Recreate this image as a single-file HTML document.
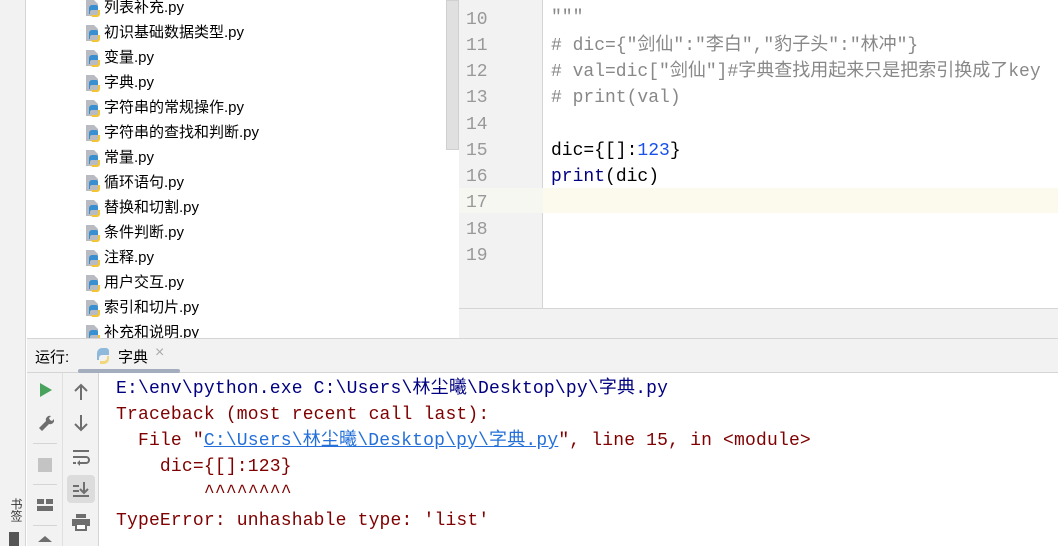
<!DOCTYPE html><html><head><meta charset="utf-8"><style>
*{margin:0;padding:0;box-sizing:border-box}
body{width:1058px;height:546px;overflow:hidden;background:#fff;position:relative;font-family:"Liberation Sans","Noto Sans CJK SC",sans-serif}
.a{position:absolute}
.row{position:absolute;left:84px;height:25px;line-height:25px;font-size:15px;color:#000;white-space:nowrap}
.row svg{position:absolute;left:0;top:4px}
.row span{position:absolute;left:20px}
.mono{font-family:"Liberation Mono","Noto Sans CJK SC",monospace;font-size:18px;white-space:pre}
.ln{position:absolute;left:466px;width:30px;color:#999;font-size:18px;font-family:"Liberation Mono",monospace}
.cl{position:absolute;left:551px;height:25px;line-height:25px}
.con{position:absolute;left:116px;height:26px;line-height:26px;letter-spacing:0.18px}
</style></head><body>
<div class="a" style="left:0;top:0;width:26px;height:546px;background:#f2f2f2;border-right:1px solid #d5d5d5"></div>
<div class="a" style="left:446px;top:0;width:13px;height:150px;background:#e0e0e0;border:1px solid #d0d0d0"></div>
<svg width="0" height="0" style="position:absolute"><defs><g id="py"><path d="M2 1h8l4 4v12H2z" fill="#b8bcc2"/><path d="M8 6h4a2 2 0 012 2v3H8a2 2 0 00-2 2v2H5V9a3 3 0 013-3z" fill="#3a8fd1"/><path d="M7 16h5a2 2 0 002-2v-3h2v4a3 3 0 01-3 3H8z" fill="#f3c534"/></g></defs></svg>
<div class="row" style="top:-5px"><svg width="18" height="18"><use href="#py"/></svg><span>列表补充.py</span></div>
<div class="row" style="top:20px"><svg width="18" height="18"><use href="#py"/></svg><span>初识基础数据类型.py</span></div>
<div class="row" style="top:45px"><svg width="18" height="18"><use href="#py"/></svg><span>变量.py</span></div>
<div class="row" style="top:70px"><svg width="18" height="18"><use href="#py"/></svg><span>字典.py</span></div>
<div class="row" style="top:95px"><svg width="18" height="18"><use href="#py"/></svg><span>字符串的常规操作.py</span></div>
<div class="row" style="top:120px"><svg width="18" height="18"><use href="#py"/></svg><span>字符串的查找和判断.py</span></div>
<div class="row" style="top:145px"><svg width="18" height="18"><use href="#py"/></svg><span>常量.py</span></div>
<div class="row" style="top:170px"><svg width="18" height="18"><use href="#py"/></svg><span>循环语句.py</span></div>
<div class="row" style="top:195px"><svg width="18" height="18"><use href="#py"/></svg><span>替换和切割.py</span></div>
<div class="row" style="top:220px"><svg width="18" height="18"><use href="#py"/></svg><span>条件判断.py</span></div>
<div class="row" style="top:245px"><svg width="18" height="18"><use href="#py"/></svg><span>注释.py</span></div>
<div class="row" style="top:270px"><svg width="18" height="18"><use href="#py"/></svg><span>用户交互.py</span></div>
<div class="row" style="top:295px"><svg width="18" height="18"><use href="#py"/></svg><span>索引和切片.py</span></div>
<div class="row" style="top:320px"><svg width="18" height="18"><use href="#py"/></svg><span>补充和说明.py</span></div>
<!-- editor -->
<div class="a" style="left:459px;top:0;width:84px;height:308px;background:#f2f2f2;border-right:1px solid #d5d5d5"></div>
<div class="a" style="left:459px;top:188px;width:599px;height:25px;background:#fcfaed"></div>
<div class="a" style="left:459px;top:188px;width:84px;height:25px;background:#f7f7f2"></div>
<div class="a" style="left:459px;top:308px;width:599px;height:30px;background:#f2f2f2;border-top:1px solid #d5d5d5"></div>
<div class="ln" style="top:10px">10</div><div class="ln" style="top:36px">11</div><div class="ln" style="top:62px">12</div><div class="ln" style="top:88px">13</div><div class="ln" style="top:115px">14</div><div class="ln" style="top:141px">15</div><div class="ln" style="top:167px">16</div><div class="ln" style="top:193px">17</div><div class="ln" style="top:220px">18</div><div class="ln" style="top:246px">19</div>
<div class="cl mono" style="top:6px;color:#888">"""</div>
<div class="cl mono" style="top:34px;color:#888"># dic={"剑仙":"李白","豹子头":"林冲"}</div>
<div class="cl mono" style="top:60px;color:#888"># val=dic["剑仙"]#字典查找用起来只是把索引换成了key</div>
<div class="cl mono" style="top:86px;color:#888"># print(val)</div>
<div class="cl mono" style="top:139px;color:#000">dic={[]:<span style="color:#1750eb">123</span>}</div>
<div class="cl mono" style="top:165px;color:#000"><span style="color:#000080">print</span>(dic)</div>
<!-- run bar -->
<div class="a" style="left:27px;top:338px;width:1031px;height:35px;background:#f2f2f2;border-top:1px solid #d5d5d5;border-bottom:1px solid #d5d5d5"></div>
<div class="a" style="left:35px;top:346px;font-size:15px">运行:</div>
<svg class="a" style="left:94px;top:347px" width="18" height="18"><path d="M8 1h4a3 3 0 013 3v4H8a3 3 0 00-3 3v2H3V6a5 5 0 015-5z" fill="#8fb9db"/><path d="M6 17h4a5 5 0 005-5V9h-2v2a3 3 0 01-3 3H6z" fill="#f0d87a"/></svg>
<div class="a" style="left:118px;top:346px;font-size:15px">字典</div>
<div class="a" style="left:155px;top:344px;font-size:16px;color:#aaa">×</div>
<div class="a" style="left:78px;top:369px;width:102px;height:4px;border-radius:2px;background:#a3adbd"></div>
<!-- console -->
<div class="a" style="left:27px;top:373px;width:36px;height:173px;background:#f2f2f2;border-right:1px solid #e0e0e0"></div>
<div class="a" style="left:63px;top:373px;width:36px;height:173px;background:#f2f2f2;border-right:1px solid #d5d5d5"></div>
<svg class="a" style="left:37px;top:382px" width="16" height="16"><path d="M3 1l12 7-12 7z" fill="#4aa35c"/></svg>
<svg class="a" style="left:36px;top:413px" width="18" height="18"><path d="M3 15l7-7a4 4 0 015-5l-2 2 1 2 2 1 2-2a4 4 0 01-5 5l-7 7z" fill="#6e6e6e"/></svg>
<div class="a" style="left:33px;top:443px;width:24px;height:1px;background:#d5d5d5"></div>
<div class="a" style="left:38px;top:458px;width:14px;height:14px;background:#c4c4c4"></div>
<div class="a" style="left:33px;top:484px;width:24px;height:1px;background:#d5d5d5"></div>
<svg class="a" style="left:36px;top:498px" width="18" height="14"><rect x="1" y="1" width="7" height="5" fill="#6e6e6e"/><rect x="10" y="1" width="7" height="5" fill="#6e6e6e"/><rect x="1" y="8" width="16" height="5" fill="#6e6e6e"/></svg>
<div class="a" style="left:33px;top:525px;width:24px;height:1px;background:#d5d5d5"></div>
<svg class="a" style="left:37px;top:536px" width="16" height="10"><path d="M8 0l7 6H1z" fill="#6e6e6e"/></svg>
<svg class="a" style="left:72px;top:383px" width="18" height="18"><path d="M9 2v15M3 8l6-6 6 6" stroke="#6e6e6e" stroke-width="2" fill="none"/></svg>
<svg class="a" style="left:72px;top:414px" width="18" height="18"><path d="M9 1v15M3 10l6 6 6-6" stroke="#6e6e6e" stroke-width="2" fill="none"/></svg>
<svg class="a" style="left:71px;top:448px" width="20" height="18"><path d="M2 3h16M2 9h13a3 3 0 010 6H9M2 15h3" stroke="#6e6e6e" stroke-width="2" fill="none"/><path d="M9 12l-3 3 3 3z" fill="#6e6e6e"/></svg>
<div class="a" style="left:67px;top:475px;width:28px;height:28px;border-radius:4px;background:#dcdcdc"></div>
<svg class="a" style="left:71px;top:480px" width="20" height="18"><path d="M2 6h6M2 11h6M2 16h16M13 2v11M9 9l4 4 4-4" stroke="#6e6e6e" stroke-width="2" fill="none"/></svg>
<svg class="a" style="left:71px;top:513px" width="20" height="18"><rect x="5" y="1" width="10" height="4" fill="#6e6e6e"/><rect x="1" y="6" width="18" height="7" fill="#6e6e6e"/><rect x="5" y="11" width="10" height="6" fill="#fff" stroke="#6e6e6e" stroke-width="2"/></svg>
<div class="a" style="left:8px;top:498px;font-size:12px;writing-mode:vertical-rl;color:#333">书签</div>
<div class="a" style="left:9px;top:532px;width:10px;height:14px;background:#555"></div>
<div class="con mono" style="top:376px;color:#000080">E:\env\python.exe C:\Users\林尘曦\Desktop\py\字典.py</div>
<div class="con mono" style="top:402px;color:#7f0000">Traceback (most recent call last):</div>
<div class="con mono" style="top:428px;color:#7f0000">  File "<span style="color:#2470d8;text-decoration:underline">C:\Users\林尘曦\Desktop\py\字典.py</span>", line 15, in &lt;module&gt;</div>
<div class="con mono" style="top:454px;color:#7f0000">    dic={[]:123}</div>
<div class="con mono" style="top:480px;color:#7f0000">        ^^^^^^^^</div>
<div class="con mono" style="top:508px;color:#7f0000">TypeError: unhashable type: 'list'</div>
</body></html>
